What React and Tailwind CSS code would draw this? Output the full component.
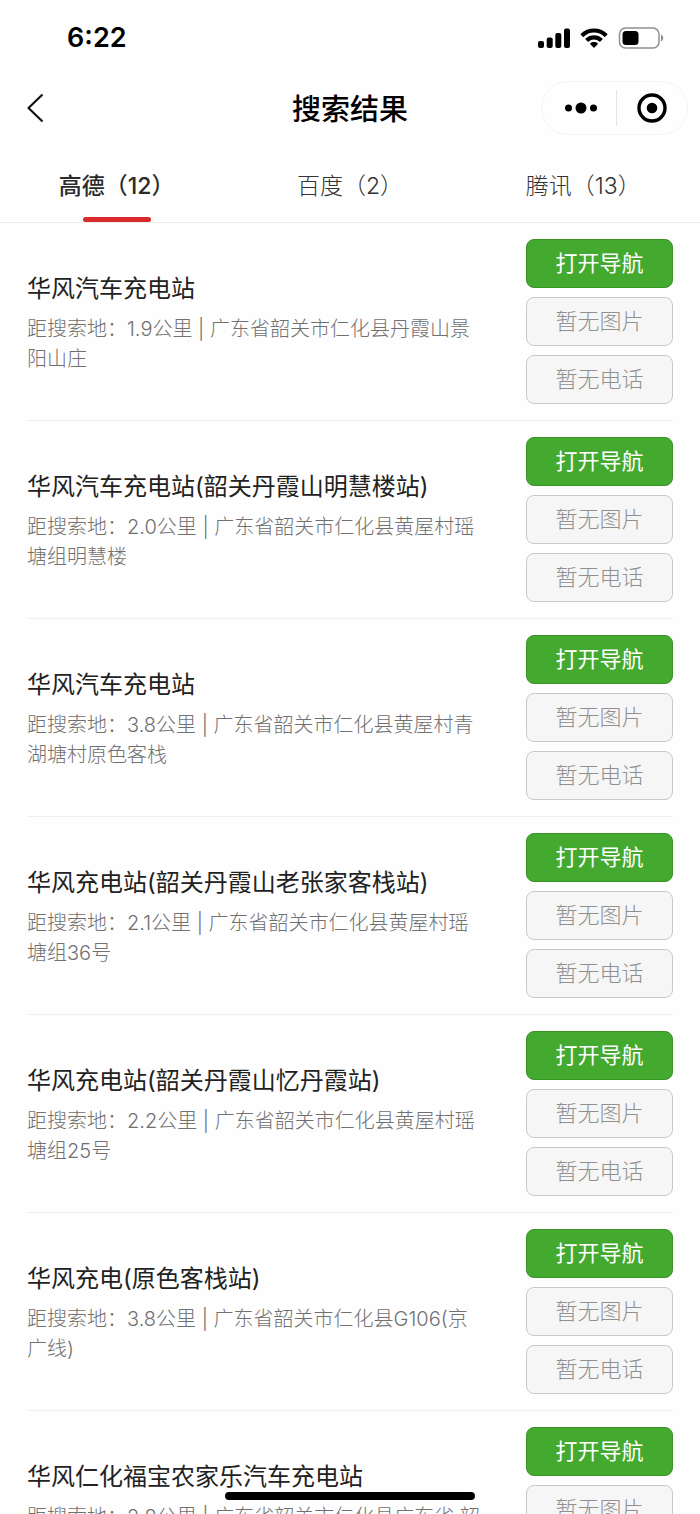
const tabs = [
  { id: "amap", label: "高德（12）" },
  { id: "baidu", label: "百度（2）" },
  { id: "tencent", label: "腾讯（13）" },
];

const stations = [
  { id: 1, name: "华风汽车充电站", distance: "1.9公里", address: "广东省韶关市仁化县丹霞山景阳山庄" },
  { id: 2, name: "华风汽车充电站(韶关丹霞山明慧楼站)", distance: "2.0公里", address: "广东省韶关市仁化县黄屋村瑶塘组明慧楼" },
  { id: 3, name: "华风汽车充电站", distance: "3.8公里", address: "广东省韶关市仁化县黄屋村青湖塘村原色客栈" },
  { id: 4, name: "华风充电站(韶关丹霞山老张家客栈站)", distance: "2.1公里", address: "广东省韶关市仁化县黄屋村瑶塘组36号" },
  { id: 5, name: "华风充电站(韶关丹霞山忆丹霞站)", distance: "2.2公里", address: "广东省韶关市仁化县黄屋村瑶塘组25号" },
  { id: 6, name: "华风充电(原色客栈站)", distance: "3.8公里", address: "广东省韶关市仁化县G106(京广线)" },
  { id: 7, name: "华风仁化福宝农家乐汽车充电站", distance: "2.8公里", address: "广东省韶关市仁化县广东省 韶关市仁化县" },
];

function StatusBar() {
  return (
    <div className="flex h-[76px] items-center justify-between pr-9 pl-[67px]">
      <span className="text-[27px] leading-8 font-semibold">6:22</span>
      <div className="flex items-center gap-[10px]">
        <svg width="32" height="20" viewBox="0 0 32 20" aria-hidden="true">
          <rect x="0" y="13" width="6" height="7" rx="2" />
          <rect x="8.7" y="9.5" width="6" height="10.5" rx="2" />
          <rect x="17.3" y="5" width="6" height="15" rx="2" />
          <rect x="26" y="0.5" width="6" height="19.5" rx="2" />
        </svg>
        <svg width="28" height="20" viewBox="0 0 28 20" aria-hidden="true">
          <path d="M14 0.5c5.1 0 9.8 1.9 13.2 5.3.3.3.3.7 0 1l-2 2c-.3.3-.7.3-1 0A14.6 14.6 0 0 0 14 4.6c-3.9 0-7.5 1.5-10.2 4.2-.3.3-.7.3-1 0l-2-2c-.3-.3-.3-.7 0-1C4.2 2.4 8.9.5 14 .5z" />
          <path d="M14 7.2c3.2 0 6.2 1.2 8.4 3.3.3.3.3.7 0 1l-2.1 2.1c-.3.3-.7.3-1 0A7.7 7.7 0 0 0 14 11.4c-2 0-3.9.8-5.3 2.2-.3.3-.7.3-1 0l-2.1-2.1c-.3-.3-.3-.7 0-1C7.8 8.4 10.8 7.2 14 7.2z" />
          <path d="M14 13.9c1.4 0 2.7.5 3.7 1.3.3.3.3.7 0 1l-3.2 3.3c-.3.3-.7.3-1 0l-3.2-3.3c-.3-.3-.3-.7 0-1 1-.8 2.3-1.3 3.7-1.3z" />
        </svg>
        <svg width="46" height="22" viewBox="0 0 46 22" aria-hidden="true">
          <rect x="1.5" y="1" width="39.5" height="20" rx="6" fill="none" stroke="#8f8f8f" strokeWidth="1.5" />
          <rect x="4.5" y="4" width="16" height="14" rx="3.5" />
          <path d="M43 7.500c1.500.6 2.200 2 2.200 3.500s-.7 2.900-2.200 3.500z" fill="#8f8f8f" />
        </svg>
      </div>
    </div>
  );
}

function NavBar() {
  return (
    <header className="grid h-16 grid-cols-[1fr_auto_1fr] items-center px-3">
      <button type="button" aria-label="返回" className="ml-3 flex h-10 w-6 items-center">
        <svg width="22" height="30" viewBox="0 0 22 30" fill="none" stroke="#111" strokeWidth="2.2" aria-hidden="true">
          <path d="M18.500 1.500 4.500 15l14 13.500" strokeLinejoin="round" />
        </svg>
      </button>
      <h1 className="pt-1 text-[29px] leading-10 font-medium">搜索结果</h1>
      <div className="flex h-[54px] w-[147px] items-center justify-self-end rounded-full border border-[#f3f3f3]">
        <button type="button" aria-label="更多" className="flex h-full flex-1 items-center justify-center pl-1">
          <svg width="34" height="12" viewBox="0 0 34 12" aria-hidden="true">
            <circle cx="4.5" cy="6" r="3.5" />
            <circle cx="17" cy="6" r="5.5" />
            <circle cx="29.5" cy="6" r="3.5" />
          </svg>
        </button>
        <span className="h-9 w-px bg-[#e3e3e3]" />
        <button type="button" aria-label="关闭" className="flex h-full flex-1 items-center justify-center">
          <svg width="30" height="30" viewBox="0 0 30 30" aria-hidden="true">
            <circle cx="15" cy="15" r="13" fill="none" stroke="#000" strokeWidth="3.4" />
            <circle cx="15" cy="15" r="5.3" />
          </svg>
        </button>
      </div>
    </header>
  );
}

function Tabs() {
  return (
    <nav role="tablist" className="grid h-[83px] grid-cols-3 border-b border-[#ececec]">
      {tabs.map((tab, index) => (
        <button
          key={tab.id}
          type="button"
          role="tab"
          aria-selected={index === 0}
          className={`flex flex-col items-center justify-between pt-7 text-[23px] leading-9 ${
            index === 0 ? "font-medium text-[#2b2b2b]" : "font-light text-[#333]"
          }`}
        >
          {tab.label}
          {index === 0 && <span className="h-[5px] w-[68px] rounded-full bg-[#d9292b]" />}
        </button>
      ))}
    </nav>
  );
}

function StationRow({ station }) {
  return (
    <li className="flex items-center gap-10 border-b border-[#efefef] py-4">
      <div className="min-w-0 flex-1 pt-[2px]">
        <h2 className="text-[24px] leading-[34px] text-[#222]">{station.name}</h2>
        <p className="mt-2 text-[20px] leading-[30px] font-light text-[#707070]">
          {`距搜索地：${station.distance} | ${station.address}`}
        </p>
      </div>
      <div className="flex w-[147px] shrink-0 flex-col gap-[9px] text-[22px]">
        <button type="button" className="h-[49px] rounded-lg border border-[#3a9428] bg-[#43a92f] text-white">
          打开导航
        </button>
        <button type="button" disabled className="h-[49px] rounded-lg border border-[#c9c9c9] bg-[#f6f6f6] font-light text-[#909090]">
          暂无图片
        </button>
        <button type="button" disabled className="h-[49px] rounded-lg border border-[#c9c9c9] bg-[#f6f6f6] font-light text-[#909090]">
          暂无电话
        </button>
      </div>
    </li>
  );
}

export default function App() {
  return (
    <div
      lang="zh-CN"
      className="relative flex h-screen flex-col overflow-hidden bg-[#fefefe] font-['Inter','Noto_Sans_CJK_SC',sans-serif] text-black"
    >
      <StatusBar />
      <NavBar />
      <Tabs />
      <main className="min-h-0 flex-1 overflow-hidden">
        <ul className="px-[27px]">
          {stations.map((station) => (
            <StationRow key={station.id} station={station} />
          ))}
        </ul>
      </main>
      <div className="absolute bottom-[14px] left-1/2 h-2 w-[250px] -translate-x-1/2 rounded-full bg-black" />
    </div>
  );
}
